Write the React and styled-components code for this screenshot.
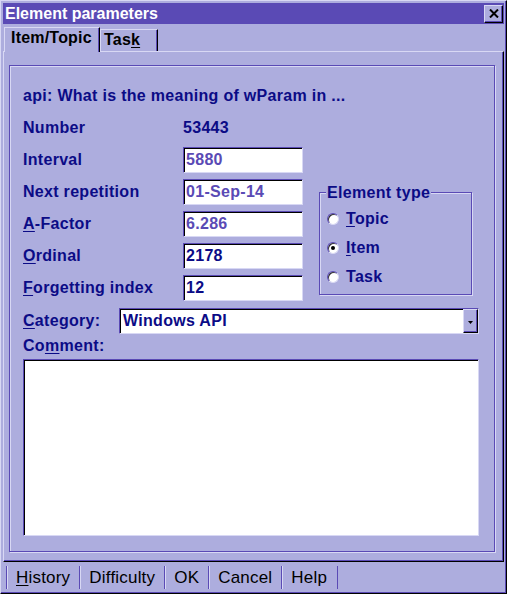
import React from "react";
import styled, { createGlobalStyle, css } from "styled-components";

const face = "#adadde";
const light = "#d8d8f4";
const shadow = "#5a4ab5";
const navy = "#0b0b86";
const dim = "#5a4ab5";

const GlobalStyle = createGlobalStyle`
  html, body {
    margin: 0;
    padding: 0;
    background: ${face};
  }
  body {
    font-family: "Liberation Sans", Arial, sans-serif;
  }
`;

const raised = css`
  border: 1px solid;
  border-color: ${light} #000 #000 ${light};
  box-shadow: inset -1px -1px 0 ${shadow};
`;

const sunken = css`
  border: 1px solid;
  border-color: ${shadow} ${light} ${light} ${shadow};
  box-shadow: inset 1px 1px 0 #000;
`;

const etched = css`
  border: 1px solid ${shadow};
  box-shadow: inset 1px 1px 0 ${light}, 1px 1px 0 ${light};
`;

const Window = styled.div`
  box-sizing: border-box;
  width: 507px;
  height: 594px;
  display: flex;
  flex-direction: column;
  background: ${face};
  padding: 2px 2px 0 2px;
  ${raised};
`;

const TitleBar = styled.div`
  height: 21px;
  flex: none;
  display: flex;
  align-items: center;
  justify-content: space-between;
  padding: 0 1px 0 2px;
  background: ${shadow};
  color: #fff;
  font: bold 16px/18px "Liberation Sans", Arial, sans-serif;
`;

const CloseButton = styled.div`
  box-sizing: border-box;
  width: 19px;
  height: 18px;
  display: flex;
  align-items: center;
  justify-content: center;
  background: ${face};
  ${raised};
`;

const TabStrip = styled.div`
  box-sizing: border-box;
  height: 27px;
  flex: none;
  display: flex;
  align-items: flex-start;
  padding: 3px 0 0 1px;
`;

const Tab = styled.div`
  box-sizing: border-box;
  position: relative;
  z-index: ${(p) => (p.$active ? 1 : 0)};
  width: ${(p) => p.$width}px;
  height: ${(p) => (p.$active ? 25 : 22)}px;
  margin-top: ${(p) => (p.$active ? 0 : 2)}px;
  padding: 1px 0 0 ${(p) => p.$pad}px;
  background: ${face};
  border-style: solid;
  border-width: 1px 1px 0 1px;
  border-color: ${light} #000 transparent ${light};
  box-shadow: inset -1px 0 0 ${shadow};
  color: #000;
  font: bold 16px/18px "Liberation Sans", Arial, sans-serif;
  letter-spacing: 0.2px;
  white-space: nowrap;
`;

const Key = styled.span`
  text-decoration: underline;
  text-underline-offset: 2px;
`;

const Panel = styled.div`
  flex: 1;
  display: flex;
  padding: 13px 8px 9px 5px;
  border: 1px solid;
  border-color: ${light} #000 #000 ${light};
  box-shadow: inset -1px -1px 0 ${shadow};
`;

const Frame = styled.div`
  flex: 1;
  display: flex;
  flex-direction: column;
  padding: 17px 15px 15px 13px;
  ${etched};
  color: ${navy};
  font: bold 16px/18px "Liberation Sans", Arial, sans-serif;
  letter-spacing: 0.3px;
`;

const Heading = styled.div`
  height: 26px;
  line-height: 26px;
  margin-bottom: 6px;
  white-space: nowrap;
`;

const Upper = styled.div`
  display: flex;
  gap: 16px;
  align-items: flex-start;
`;

const Fields = styled.div`
  display: grid;
  grid-template-columns: 160px 120px;
  grid-auto-rows: 26px;
  row-gap: 6px;
`;

const Label = styled.div`
  line-height: 26px;
  white-space: nowrap;
`;

const Edit = styled.div`
  box-sizing: border-box;
  height: 26px;
  padding-left: 2px;
  background: #fff;
  line-height: 23px;
  color: ${(p) => (p.$dim ? dim : navy)};
  ${sunken};
`;

const GroupBox = styled.div`
  box-sizing: border-box;
  width: 153px;
  height: 103px;
  margin-top: 77px;
  padding: 0 0 0 7px;
  ${etched};
`;

const Legend = styled.div`
  width: fit-content;
  margin: -9px 0 0 -1px;
  padding: 0 1px;
  background: ${face};
`;

const RadioList = styled.div`
  padding-top: 2px;
`;

const RadioRow = styled.div`
  height: 29px;
  display: flex;
  align-items: center;
  gap: 7px;
`;

const RadioCircle = styled.span`
  box-sizing: border-box;
  width: 12px;
  height: 12px;
  border-radius: 50%;
  background: #fff;
  display: flex;
  align-items: center;
  justify-content: center;
  border: 1px solid;
  border-color: ${shadow} ${light} ${light} ${shadow};
  box-shadow: inset 1px 1px 0 #333;

  &::after {
    content: "";
    width: 4px;
    height: 4px;
    border-radius: 50%;
    background: ${(p) => (p.$checked ? "#000" : "transparent")};
  }
`;

const CategoryRow = styled.div`
  display: flex;
  align-items: center;
  margin-top: 7px;
`;

const CategoryLabel = styled.div`
  width: 96px;
  flex: none;
  white-space: nowrap;
`;

const Combo = styled.div`
  box-sizing: border-box;
  flex: 1;
  height: 26px;
  display: flex;
  background: #fff;
  ${sunken};
`;

const ComboText = styled.div`
  flex: 1;
  padding-left: 3px;
  line-height: 23px;
  color: ${navy};
`;

const DropButton = styled.div`
  box-sizing: border-box;
  width: 15px;
  display: flex;
  align-items: center;
  justify-content: center;
  padding-top: 2px;
  background: ${face};
  ${raised};
`;

const CommentLabel = styled.div`
  margin: 3px 0 4px;
`;

const TextBox = styled.div`
  flex: 1;
  background: #fff;
  ${sunken};
`;

const ButtonBar = styled.div`
  box-sizing: border-box;
  height: 31px;
  flex: none;
  display: flex;
  align-items: flex-start;
  padding: 4px 0 0 3px;
`;

const BarButton = styled.div`
  height: 23px;
  padding: 0 9px;
  border-left: 1px solid ${shadow};
  box-shadow: inset 1px 0 0 ${light};
  color: #000;
  font: 17px/23px "Liberation Sans", Arial, sans-serif;
  letter-spacing: 0.2px;
  white-space: nowrap;

  &:last-child {
    padding-right: 10px;
    border-right: 1px solid ${shadow};
  }
`;

const fields = [
  { label: "Interval", value: "5880", dim: true },
  { label: "Next repetition", value: "01-Sep-14", dim: true },
  { label: <><Key>A</Key>-Factor</>, value: "6.286", dim: true },
  { label: <><Key>O</Key>rdinal</>, value: "2178" },
  { label: <><Key>F</Key>orgetting index</>, value: "12" },
];

const types = [
  { label: <><Key>T</Key>opic</> },
  { label: <><Key>I</Key>tem</>, checked: true },
  { label: "Task" },
];

export default function App() {
  return (
    <>
      <GlobalStyle />
      <Window>
        <TitleBar>
          <span>Element parameters</span>
          <CloseButton>
            <svg width="10" height="9" viewBox="0 0 10 9">
              <path d="M1 0.5L9 8.5M9 0.5L1 8.5" stroke="#000" strokeWidth="2" />
            </svg>
          </CloseButton>
        </TitleBar>

        <TabStrip>
          <Tab $active $width={96} $pad={6}>Item/Topic</Tab>
          <Tab $width={58} $pad={3}>
            Tas<Key>k</Key>
          </Tab>
        </TabStrip>

        <Panel>
          <Frame>
            <Heading>api: What is the meaning of wParam in ...</Heading>

            <Upper>
              <Fields>
                <Label>Number</Label>
                <Label>53443</Label>
                {fields.map((f, i) => (
                  <React.Fragment key={i}>
                    <Label>{f.label}</Label>
                    <Edit $dim={f.dim}>{f.value}</Edit>
                  </React.Fragment>
                ))}
              </Fields>

              <GroupBox>
                <Legend>Element type</Legend>
                <RadioList>
                  {types.map((t, i) => (
                    <RadioRow key={i}>
                      <RadioCircle $checked={t.checked} />
                      <span>{t.label}</span>
                    </RadioRow>
                  ))}
                </RadioList>
              </GroupBox>
            </Upper>

            <CategoryRow>
              <CategoryLabel>
                <Key>C</Key>ategory:
              </CategoryLabel>
              <Combo>
                <ComboText>Windows API</ComboText>
                <DropButton>
                  <svg width="5" height="3" viewBox="0 0 5 3">
                    <path d="M0 0H5L2.5 3Z" fill="#000" />
                  </svg>
                </DropButton>
              </Combo>
            </CategoryRow>

            <CommentLabel>
              Co<Key>m</Key>ment:
            </CommentLabel>
            <TextBox />
          </Frame>
        </Panel>

        <ButtonBar>
          <BarButton>
            <Key>H</Key>istory
          </BarButton>
          <BarButton>Difficulty</BarButton>
          <BarButton>OK</BarButton>
          <BarButton>Cancel</BarButton>
          <BarButton>Help</BarButton>
        </ButtonBar>
      </Window>
    </>
  );
}
